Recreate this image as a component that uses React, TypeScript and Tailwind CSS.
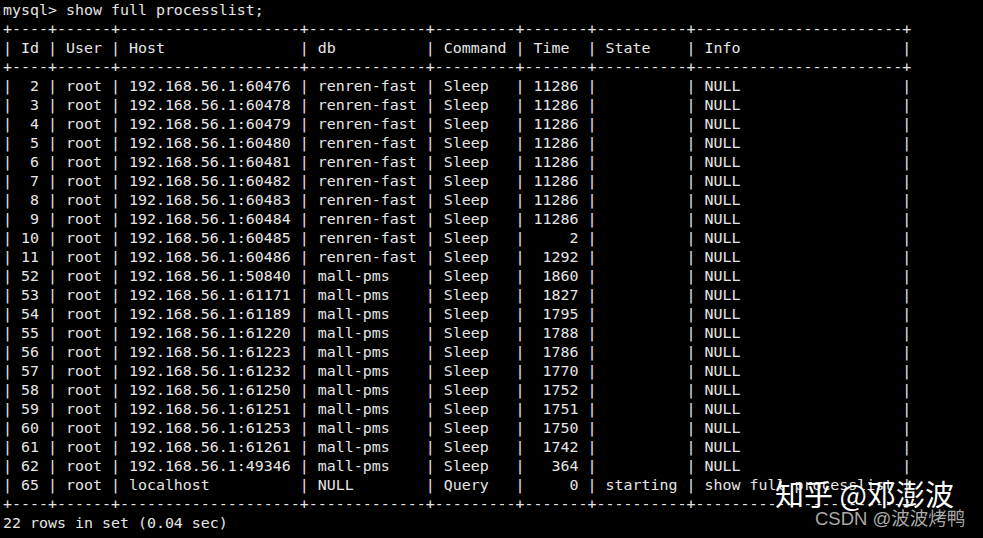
const rows: [number, string, string, string, string, string][] = [
  [2, "192.168.56.1:60476", "renren-fast", "Sleep", "11286", "NULL"],
  [3, "192.168.56.1:60478", "renren-fast", "Sleep", "11286", "NULL"],
  [4, "192.168.56.1:60479", "renren-fast", "Sleep", "11286", "NULL"],
  [5, "192.168.56.1:60480", "renren-fast", "Sleep", "11286", "NULL"],
  [6, "192.168.56.1:60481", "renren-fast", "Sleep", "11286", "NULL"],
  [7, "192.168.56.1:60482", "renren-fast", "Sleep", "11286", "NULL"],
  [8, "192.168.56.1:60483", "renren-fast", "Sleep", "11286", "NULL"],
  [9, "192.168.56.1:60484", "renren-fast", "Sleep", "11286", "NULL"],
  [10, "192.168.56.1:60485", "renren-fast", "Sleep", "2", "NULL"],
  [11, "192.168.56.1:60486", "renren-fast", "Sleep", "1292", "NULL"],
  [52, "192.168.56.1:50840", "mall-pms", "Sleep", "1860", "NULL"],
  [53, "192.168.56.1:61171", "mall-pms", "Sleep", "1827", "NULL"],
  [54, "192.168.56.1:61189", "mall-pms", "Sleep", "1795", "NULL"],
  [55, "192.168.56.1:61220", "mall-pms", "Sleep", "1788", "NULL"],
  [56, "192.168.56.1:61223", "mall-pms", "Sleep", "1786", "NULL"],
  [57, "192.168.56.1:61232", "mall-pms", "Sleep", "1770", "NULL"],
  [58, "192.168.56.1:61250", "mall-pms", "Sleep", "1752", "NULL"],
  [59, "192.168.56.1:61251", "mall-pms", "Sleep", "1751", "NULL"],
  [60, "192.168.56.1:61253", "mall-pms", "Sleep", "1750", "NULL"],
  [61, "192.168.56.1:61261", "mall-pms", "Sleep", "1742", "NULL"],
  [62, "192.168.56.1:49346", "mall-pms", "Sleep", "364", "NULL"],
];

const border =
  "+----+------+--------------------+-------------+---------+-------+----------+-----------------------+";

function line(id: string, user: string, host: string, db: string, cmd: string, time: string, state: string, info: string, num = false) {
  const l = (s: string, n: number) => s.padEnd(n);
  const r = (s: string, n: number) => s.padStart(n);
  return (
    "| " + (num ? r(id, 2) : l(id, 2)) +
    " | " + l(user, 4) +
    " | " + l(host, 18) +
    " | " + l(db, 11) +
    " | " + l(cmd, 7) +
    " | " + (num ? r(time, 5) : l(time, 5)) +
    " | " + l(state, 8) +
    " | " + l(info, 21) + " |"
  );
}

export default function App() {
  const lines = [
    "mysql> show full processlist;",
    border,
    line("Id", "User", "Host", "db", "Command", "Time", "State", "Info"),
    border,
    ...rows.map(([id, host, db, cmd, time, info]) =>
      line(String(id), "root", host, db, cmd, time, "", info, true)
    ),
    line("65", "root", "localhost", "NULL", "Query", "0", "starting", "show full processlist", true),
    border,
    "22 rows in set (0.04 sec)",
  ];

  return (
    <div className="relative w-[983px] h-[538px] bg-black overflow-hidden">
      <pre className="pl-[3px] pt-[1px] text-[14.95px] leading-[19px] text-[#e6e6e6] font-['DejaVu_Sans_Mono',monospace]">
        {lines.join("\n")}
      </pre>
      {/* watermarks */}
      <div className="absolute left-[775px] top-[479px] text-[29px] leading-none text-white font-['Noto_Sans_CJK_SC',sans-serif]">
        知乎 @邓澎波
      </div>
      <div className="absolute left-[815px] top-[510px] text-[18.5px] leading-none text-[#a9a9a9] font-['Liberation_Sans','Noto_Sans_CJK_SC',sans-serif]">
        CSDN @波波烤鸭
      </div>
    </div>
  );
}
